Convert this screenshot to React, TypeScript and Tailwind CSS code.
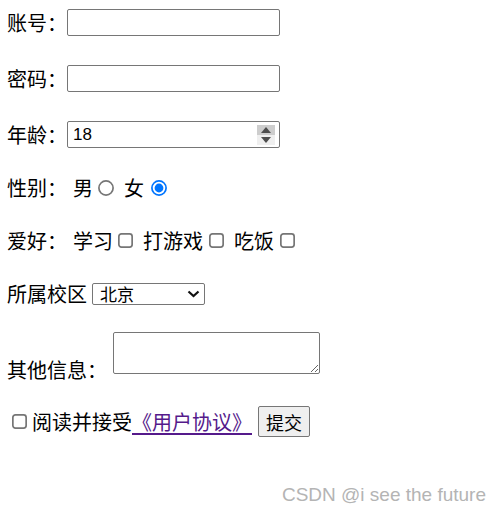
function Radio({ checked = false, className = "" }: { checked?: boolean; className?: string }) {
  return (
    <svg
      role="radio"
      aria-checked={checked}
      width="16"
      height="16"
      viewBox="0 0 16 16"
      className={"block shrink-0 " + className}
    >
      {checked ? (
        <>
          <circle cx="8" cy="8" r="7.1" fill="white" stroke="#0075ff" strokeWidth="1.7" />
          <circle cx="8" cy="8" r="4.4" fill="#0075ff" />
        </>
      ) : (
        <circle cx="8" cy="8" r="7.1" fill="white" stroke="#767676" strokeWidth="1.7" />
      )}
    </svg>
  );
}

function Check({ className = "" }: { className?: string }) {
  return (
    <svg
      role="checkbox"
      aria-checked={false}
      width="15"
      height="15"
      viewBox="0 0 15 15"
      className={"block shrink-0 " + className}
    >
      <rect x="0.85" y="0.85" width="13.3" height="13.3" rx="2.6" fill="white" stroke="#767676" strokeWidth="1.7" />
    </svg>
  );
}

export default function App() {
  return (
    <div className="relative h-[513px] w-[500px] overflow-hidden bg-white pl-[7px] pt-[9px] font-['Noto_Sans_CJK_SC','Noto_Sans_CJK_JP',sans-serif] text-[20px] leading-[27px] text-black">
      {/* 账号 */}
      <div className="flex h-[27px] items-center">
        <span className="w-[60px] shrink-0">账号：</span>
        <input
          type="text"
          className="box-border h-[27px] w-[213px] rounded-[2px] border border-[#767676] bg-white outline-none"
        />
      </div>

      {/* 密码 */}
      <div className="mt-[29px] flex h-[27px] items-center">
        <span className="w-[60px] shrink-0">密码：</span>
        <input
          type="password"
          className="box-border h-[27px] w-[213px] rounded-[2px] border border-[#767676] bg-white outline-none"
        />
      </div>

      {/* 年龄 */}
      <div className="mt-[29px] flex h-[27px] items-center">
        <span className="w-[60px] shrink-0">年龄：</span>
        <div className="box-border flex h-[27px] w-[213px] items-center justify-between rounded-[2px] border border-[#767676] bg-white pl-[5px] pr-[4px]">
          <span className="font-['Liberation_Sans',Arial,sans-serif] text-[17px] leading-[20px]">18</span>
          <div className="flex h-[20px] w-[18px] flex-col">
            <div className="flex h-[10px] items-center justify-center bg-[#cdcdcd]">
              <svg width="10" height="6" viewBox="0 0 10 6">
                <polygon points="5,0 10,6 0,6" fill="#4d4d4d" />
              </svg>
            </div>
            <div className="flex h-[10px] items-center justify-center bg-[#efefef]">
              <svg width="10" height="6" viewBox="0 0 10 6">
                <polygon points="0,0 10,0 5,6" fill="#4d4d4d" />
              </svg>
            </div>
          </div>
        </div>
      </div>

      {/* 性别 */}
      <div className="mt-[26px] flex h-[27px] items-center">
        <span className="w-[60px] shrink-0">性别：</span>
        <span className="ml-[6px]">男</span>
        <Radio className="ml-[5px]" />
        <span className="ml-[10px]">女</span>
        <Radio checked className="ml-[7px]" />
      </div>

      {/* 爱好 */}
      <div className="mt-[26px] flex h-[27px] items-center">
        <span className="w-[60px] shrink-0">爱好：</span>
        <span className="ml-[6px]">学习</span>
        <Check className="ml-[5px]" />
        <span className="ml-[10px]">打游戏</span>
        <Check className="ml-[6px]" />
        <span className="ml-[10px]">吃饭</span>
        <Check className="ml-[6px]" />
      </div>

      {/* 所属校区 */}
      <div className="mt-[26px] flex h-[27px] items-center">
        <span className="shrink-0">所属校区</span>
        <div className="ml-[5px] box-border flex h-[22px] w-[113px] items-center justify-between rounded-[2px] border border-[#767676] bg-white pl-[7px] pr-[4px]">
          <span className="text-[17px] leading-[20px]">北京</span>
          <svg width="13" height="8" viewBox="0 0 13 8">
            <polyline points="1.5,1.5 6.5,6 11.5,1.5" fill="none" stroke="#111" strokeWidth="2.2" />
          </svg>
        </div>
      </div>

      {/* 其他信息 */}
      <div className="mt-[25px] flex h-[51px] items-end">
        <span className="shrink-0">其他信息：</span>
        <textarea className="mb-[9px] ml-[6px] box-border h-[42px] w-[207px] rounded-[2px] border border-[#767676] bg-white outline-none" />
      </div>

      {/* 协议 + 提交 */}
      <div className="mt-[23px] flex h-[31px] items-center">
        <Check className="ml-[5px]" />
        <span className="ml-[5px]">阅读并接受</span>
        <a href="#" className="text-[#551a8b] underline decoration-[1.5px] underline-offset-[3px]">
          《用户协议》
        </a>
        <button
          type="button"
          className="ml-[6px] box-border h-[31px] w-[52px] rounded-[2px] border border-[#767676] bg-[#efefef] text-[18px] leading-[24px] text-black"
        >
          提交
        </button>
      </div>

      {/* watermark */}
      <div className="absolute right-[14px] top-[484px] font-['Liberation_Sans',Arial,sans-serif] text-[19px] leading-[22px] text-[#b4b4b4]">
        CSDN @i see the future
      </div>
    </div>
  );
}
